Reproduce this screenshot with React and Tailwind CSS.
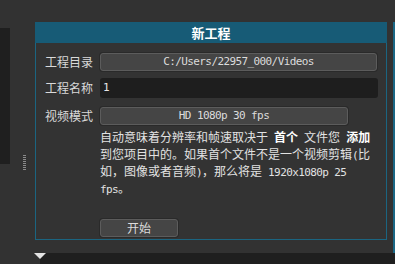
import React from 'react';

const mono = "font-['DejaVu_Sans_Mono',monospace] text-[11px] tracking-[-0.6px]";

function M({ children }) {
  return <span className={mono}>{children}</span>;
}

function Button({ width, children }) {
  return (
    <div
      className={`${width} h-[18px] flex items-center justify-center rounded-[3px] border border-[#5c5c5c] bg-[#454545] text-[#dcdcdc] shadow-[0_0_0_1px_#2a2a2a]`}
    >
      {children}
    </div>
  );
}

function Row({ label, children, className = '' }) {
  return (
    <div className={`flex items-center ${className}`}>
      <div className="w-[55px] text-[#dadada] leading-none">{label}</div>
      {children}
    </div>
  );
}

function NewProjectDialog() {
  return (
    <div className="absolute left-[35px] top-[22px] w-[352px] h-[218px] flex flex-col">
      <div className="h-[21px] bg-[#175b76] flex items-center justify-center text-white font-bold text-[13px]">
        新工程
      </div>
      <div className="flex-1 border border-t-0 border-[#1b6581] bg-[#333333] pl-[9px] pt-[10px]">
        <Row label="工程目录">
          <Button width="w-[277px]">
            <M>C:/Users/22957_000/Videos</M>
          </Button>
        </Row>
        <Row label="工程名称" className="mt-[7px]">
          <div className="w-[278px] h-[20px] rounded-[3px] bg-[#1e1e1e] flex items-center pl-[3px] text-[#e6e6e6]">
            <M>1</M>
          </div>
        </Row>
        <Row label="视频模式" className="mt-[9px]">
          <Button width="w-[248px]">
            <M>HD 1080p 30 fps</M>
          </Button>
        </Row>
        <div className="ml-[55px] mt-[4px] leading-[15px] text-[#e2e2e2] whitespace-nowrap">
          <div>
            自动意味着分辨率和帧速取决于<M> </M>
            <span className="font-bold text-white">首个</span>
            <M> </M>文件您<M> </M>
            <span className="font-bold text-white">添加</span>
          </div>
          <div>
            到您项目中的。如果首个文件不是一个视频剪辑<M>(</M>比
          </div>
          <div>
            如，图像或者音频<M>)</M>，那么将是<M> 1920x1080p 25</M>
          </div>
          <div>
            <M>fps</M>。
          </div>
        </div>
        <div className="ml-[55px] mt-[22px]">
          <Button width="w-[78px]">开始</Button>
        </div>
      </div>
    </div>
  );
}

export default function App() {
  return (
    <div className="relative w-[395px] h-[264px] overflow-hidden bg-[#323232] font-['Noto_Sans_CJK_SC',sans-serif] text-[12px]">
      <div className="flex h-[253px]">
        <div className="w-[10px] mt-[28px] h-[136px] bg-[#1f1f1f]" />
        <div className="ml-[13px] mt-[155px] w-[3px] h-[16px] bg-[repeating-linear-gradient(to_bottom,#8a8a8a_0px,#8a8a8a_1px,transparent_1px,transparent_2px)]" />
        <div className="flex-1" />
        <div className="w-[2px] mt-[22px] bg-[#1a6785]" />
      </div>
      <div className="relative flex h-[11px]">
        <div className="w-[40px]" />
        <div className="flex-1 bg-[#1f1f1f]" />
        <svg className="absolute left-[34px] top-0" width="12" height="6" viewBox="0 0 12 6">
          <polygon points="0,0 12,0 6,6" fill="#e4e4e4" />
        </svg>
      </div>
      <NewProjectDialog />
    </div>
  );
}
